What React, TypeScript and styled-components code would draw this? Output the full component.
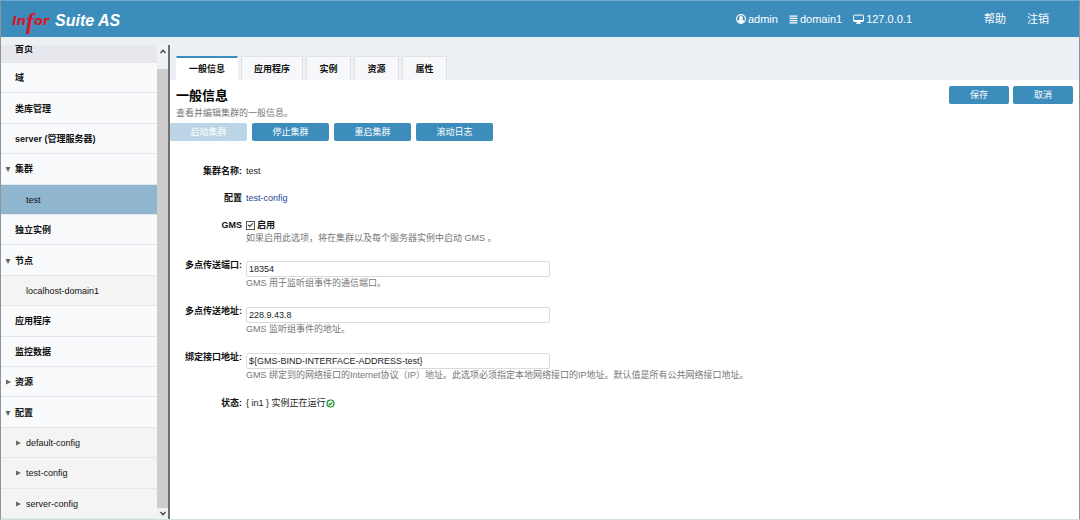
import React from "react";
import styled, { createGlobalStyle, css } from "styled-components";
import { FaAlignJustify } from "react-icons/fa";

const GlobalStyle = createGlobalStyle`
  *, *::before, *::after { box-sizing: border-box; }
  body {
    margin: 0;
    background: #fff;
    color: #222;
    font: 9px/14px "Liberation Sans", "Noto Sans CJK SC", sans-serif;
  }
  button, input { font: inherit; }
`;

const Page = styled.div`
  height: 100vh;
  display: flex;
  flex-direction: column;
  border: 1px solid #8f9499;
  border-top-color: #6fabd0;
  border-bottom-color: #cfdfe0;
`;

const Header = styled.header`
  flex: none;
  height: 36px;
  display: flex;
  align-items: center;
  justify-content: space-between;
  padding: 0 30px 0 11px;
  background: #3c8dbc;
  color: #fff;
`;

const Brand = styled.div`
  display: flex;
  align-items: center;
  gap: 1px;
  padding-top: 4px;
  font-size: 16px;
  line-height: 20px;
  font-weight: bold;
  font-style: italic;
`;

const BrandScript = styled.span`
  width: 42px;
  display: flex;
  align-items: center;
  color: #dc1428;
  font-family: "DejaVu Sans", sans-serif;
  font-size: 13px;
  line-height: 20px;
  white-space: nowrap;
`;

const BrandF = styled.span`
  font-family: "Liberation Serif", serif;
  font-size: 24px;
`;

const HeaderInfo = styled.div`
  display: flex;
  align-items: center;
  font-size: 11px;
  line-height: 16px;
`;

const InfoItem = styled.span`
  display: flex;
  align-items: center;
  gap: 2px;
  margin-right: 11px;
`;

const HeaderLinks = styled.nav`
  display: flex;
  gap: 21px;
  margin-left: 61px;
`;

const HeaderLink = styled.a`
  color: #fff;
  text-decoration: none;
`;

const Body = styled.div`
  flex: 1;
  min-height: 0;
  display: flex;
  background: #ecf0f4;
`;

const Sidebar = styled.aside`
  flex: none;
  width: 169px;
  margin-top: 8px;
  display: flex;
  border-right: 2px solid #6d6f72;
`;

const Tree = styled.nav`
  flex: 1;
  display: flex;
  flex-direction: column;
  overflow: hidden;
  background: #f9fafc;
`;

const TreeItem = styled.a<{ $depth?: number; $selected?: boolean; $first?: boolean }>`
  position: relative;
  flex: 1 0 30px;
  display: flex;
  align-items: center;
  padding-top: 1px;
  padding-left: 14px;
  border-bottom: 1px solid #e4e6ea;
  color: #111;
  font-weight: bold;
  text-decoration: none;
  ${(p) =>
    p.$depth &&
    css`
      padding-left: 25px;
      font-weight: normal;
      background: #f4f4f5;
    `}
  ${(p) => p.$selected && css`background: #8fb5cf;`}
  ${(p) =>
    p.$first &&
    css`
      flex: none;
      height: 18px;
      padding-top: 0;
      align-items: flex-start;
      line-height: 8px;
      background: #e6e8ed;
    `}
`;

const Arrow = styled.svg<{ $depth?: number }>`
  position: absolute;
  left: ${(p) => (p.$depth ? 14 : 4)}px;
  fill: #666;
`;

const ScrollBar = styled.div`
  flex: none;
  width: 11px;
  display: flex;
  flex-direction: column;
  background: #f0f1f3;
`;

const ScrollButton = styled.button<{ $tall?: boolean }>`
  height: ${(p) => (p.$tall ? 24 : 11)}px;
  padding: ${(p) => (p.$tall ? "4px 0 0" : "0")};
  display: flex;
  justify-content: center;
  align-items: ${(p) => (p.$tall ? "flex-start" : "center")};
  border: 0;
  background: none;
`;

const Thumb = styled.div`
  flex: 1;
  background: #cdcdcd;
`;

const Main = styled.main`
  flex: 1;
  min-width: 0;
  display: flex;
  flex-direction: column;
`;

const Tabs = styled.div`
  flex: none;
  display: flex;
  gap: 3px;
  height: 43px;
  padding: 19px 0 0 6px;
`;

const Tab = styled.button<{ $active?: boolean; $wide?: boolean }>`
  width: ${(p) => (p.$wide ? 62 : 45)}px;
  padding: 0;
  border: 1px solid #e0e2e6;
  border-bottom: 0;
  background: #f7f8fa;
  color: #111;
  font-weight: bold;
  ${(p) =>
    p.$active &&
    css`
      background: #fff;
      border-color: #fff;
      border-top: 2px solid #3c8dbc;
    `}
`;

const Content = styled.section`
  flex: 1;
  background: #fff;
`;

const TitleRow = styled.div`
  display: flex;
  justify-content: space-between;
  align-items: flex-start;
  padding: 6px 6px 4px;
`;

const Title = styled.h1`
  margin: 0;
  font-size: 13px;
  line-height: 20px;
  padding-bottom: 1px;
  color: #000;
`;

const Hint = styled.p`
  margin: 0;
  line-height: 12px;
  color: #777;
`;

const Actions = styled.div<{ $tight?: boolean }>`
  display: flex;
  gap: ${(p) => (p.$tight ? 4 : 5)}px;
`;

const Button = styled.button<{ $wide?: boolean }>`
  width: ${(p) => (p.$wide ? 77 : 60)}px;
  height: 18px;
  padding: 0;
  border: 0;
  border-radius: 2px;
  background: #3c8dbc;
  color: #fff;
  &:disabled { background: #bbd5e6; color: #fff; }
`;

const Form = styled.form`
  display: grid;
  gap: 13px;
  padding-top: 23px;
`;

const Row = styled.div`
  display: grid;
  grid-template-columns: 72px 1fr;
  column-gap: 4px;
`;

const Label = styled.label`
  text-align: right;
  font-weight: bold;
  white-space: nowrap;
  color: #111;
`;

const FieldHint = styled(Hint)<{ $flush?: boolean }>`
  padding-bottom: ${(p) => (p.$flush ? 1 : 2)}px;
`;

const Input = styled.input`
  display: block;
  width: 304px;
  max-width: 100%;
  height: 16px;
  margin-top: 3px;
  padding: 0 2px;
  border: 1px solid #d9dadc;
  border-radius: 2px;
  background: #fff;
  color: #222;
`;

const Inline = styled.div<{ $tight?: boolean }>`
  display: flex;
  align-items: center;
  gap: ${(p) => (p.$tight ? 0 : 2)}px;
`;

const Check = styled.input`
  appearance: none;
  position: relative;
  width: 9px;
  height: 9px;
  margin: 0;
  border: 1px solid #555;
  background: #fff;
  &:checked::after {
    content: "";
    position: absolute;
    left: 1px;
    top: 1px;
    width: 5px;
    height: 3px;
    border: solid #333;
    border-width: 0 0 1px 1px;
    transform: rotate(-45deg);
  }
`;

const CheckLabel = styled.label`
  font-weight: bold;
  color: #111;
`;

const ConfigLink = styled.a`
  color: #1f47a0;
  text-decoration: none;
`;

function UserIcon() {
  return (
    <svg width="10" height="10" viewBox="0 0 20 20" aria-hidden="true">
      <circle cx="10" cy="10" r="8.8" fill="none" stroke="#fff" strokeWidth="2.2" />
      <circle cx="10" cy="7.8" r="3.8" fill="#fff" />
      <path d="M3.6 15.6c.5-3 2-4.4 3.8-4.4 1.6 1.2 3.6 1.2 5.2 0 1.8 0 3.3 1.4 3.8 4.4A8.8 8.8 0 0 1 3.6 15.6z" fill="#fff" />
    </svg>
  );
}

function MonitorIcon() {
  return (
    <svg width="11" height="10" viewBox="0 0 22 20" aria-hidden="true">
      <rect x="1.2" y="2.2" width="19.6" height="12.6" rx="1.4" fill="none" stroke="#fff" strokeWidth="2" />
      <path d="M1 11.8h20v3H1zM8 15h6l.6 2.8H16v1.6H6v-1.6h1.4z" fill="#fff" />
    </svg>
  );
}

function RunningIcon() {
  return (
    <svg width="9" height="9" viewBox="0 0 18 18" fill="none" stroke="#1b8f2c" role="img" aria-label="正在运行">
      <circle cx="9" cy="9" r="7" strokeWidth="2.4" />
      <path d="M5.4 9l2.6 2.8 4.8-5" strokeWidth="2.6" />
    </svg>
  );
}

type Node = { text: string; depth?: number; arrow?: "open" | "closed"; selected?: boolean; first?: boolean };

const nodes: Node[] = [
  { text: "首页", first: true },
  { text: "域" },
  { text: "类库管理" },
  { text: "server (管理服务器)" },
  { text: "集群", arrow: "open" },
  { text: "test", depth: 1, selected: true },
  { text: "独立实例" },
  { text: "节点", arrow: "open" },
  { text: "localhost-domain1", depth: 1 },
  { text: "应用程序" },
  { text: "监控数据" },
  { text: "资源", arrow: "closed" },
  { text: "配置", arrow: "open" },
  { text: "default-config", depth: 1, arrow: "closed" },
  { text: "test-config", depth: 1, arrow: "closed" },
  { text: "server-config", depth: 1, arrow: "closed" },
];

const tabs = ["一般信息", "应用程序", "实例", "资源", "属性"];

const fields = [
  { id: "port", label: "多点传送端口:", value: "18354", hint: "GMS 用于监听组事件的通信端口。" },
  { id: "address", label: "多点传送地址:", value: "228.9.43.8", hint: "GMS 监听组事件的地址。" },
  {
    id: "bind",
    label: "绑定接口地址:",
    value: "${GMS-BIND-INTERFACE-ADDRESS-test}",
    hint: "GMS 绑定到的网络接口的Internet协议（IP）地址。此选项必须指定本地网络接口的IP地址。默认值是所有公共网络接口地址。",
  },
];

export default function App() {
  return (
    <>
      <GlobalStyle />
      <Page>
        <Header>
          <Brand>
            <BrandScript>In<BrandF>f</BrandF>or</BrandScript>
            <span>Suite AS</span>
          </Brand>
          <HeaderInfo>
            <InfoItem><UserIcon />admin</InfoItem>
            <InfoItem><FaAlignJustify size={9} />domain1</InfoItem>
            <InfoItem><MonitorIcon />127.0.0.1</InfoItem>
            <HeaderLinks>
              <HeaderLink href="#help">帮助</HeaderLink>
              <HeaderLink href="#logout">注销</HeaderLink>
            </HeaderLinks>
          </HeaderInfo>
        </Header>
        <Body>
          <Sidebar>
            <Tree>
              {nodes.map((n) => (
                <TreeItem key={n.text} href="#" $depth={n.depth} $selected={n.selected} $first={n.first}>
                  {n.arrow && (
                    <Arrow width="6" height="6" viewBox="0 0 6 6" $depth={n.depth}>
                      <path d={n.arrow === "open" ? "M.5 1h5L3 6z" : "M1 .5v5L6 3z"} />
                    </Arrow>
                  )}
                  {n.text}
                </TreeItem>
              ))}
            </Tree>
            <ScrollBar>
              <ScrollButton $tall aria-label="向上滚动">
                <svg width="6" height="5" viewBox="0 0 6 5" fill="none" stroke="#444" strokeWidth="1.4"><path d="M.5 4L3 1.2 5.5 4" /></svg>
              </ScrollButton>
              <Thumb />
              <ScrollButton aria-label="向下滚动">
                <svg width="6" height="5" viewBox="0 0 6 5" fill="none" stroke="#444" strokeWidth="1.4"><path d="M.5 1L3 3.8 5.5 1" /></svg>
              </ScrollButton>
            </ScrollBar>
          </Sidebar>
          <Main>
            <Tabs role="tablist">
              {tabs.map((t, i) => (
                <Tab key={t} role="tab" aria-selected={i === 0} $active={i === 0} $wide={t.length > 2}>{t}</Tab>
              ))}
            </Tabs>
            <Content>
              <TitleRow>
                <div>
                  <Title>一般信息</Title>
                  <Hint>查看并编辑集群的一般信息。</Hint>
                </div>
                <Actions $tight>
                  <Button>保存</Button>
                  <Button>取消</Button>
                </Actions>
              </TitleRow>
              <Actions>
                <Button $wide disabled>启动集群</Button>
                <Button $wide>停止集群</Button>
                <Button $wide>重启集群</Button>
                <Button $wide>滚动日志</Button>
              </Actions>
              <Form>
                <Row><Label as="span">集群名称:</Label><span>test</span></Row>
                <Row>
                  <Label as="span">配置</Label>
                  <span><ConfigLink href="#config">test-config</ConfigLink></span>
                </Row>
                <Row>
                  <Label as="span">GMS</Label>
                  <div>
                    <Inline>
                      <Check type="checkbox" id="gms" defaultChecked />
                      <CheckLabel htmlFor="gms">启用</CheckLabel>
                    </Inline>
                    <FieldHint $flush>如果启用此选项，将在集群以及每个服务器实例中启动 GMS 。</FieldHint>
                  </div>
                </Row>
                {fields.map((f) => (
                  <Row key={f.id}>
                    <Label htmlFor={f.id}>{f.label}</Label>
                    <div>
                      <Input id={f.id} defaultValue={f.value} />
                      <FieldHint>{f.hint}</FieldHint>
                    </div>
                  </Row>
                ))}
                <Row>
                  <Label as="span">状态:</Label>
                  <Inline as="span" $tight>
                    <span>{"{ in1 } 实例正在运行"}</span>
                    <RunningIcon />
                  </Inline>
                </Row>
              </Form>
            </Content>
          </Main>
        </Body>
      </Page>
    </>
  );
}
